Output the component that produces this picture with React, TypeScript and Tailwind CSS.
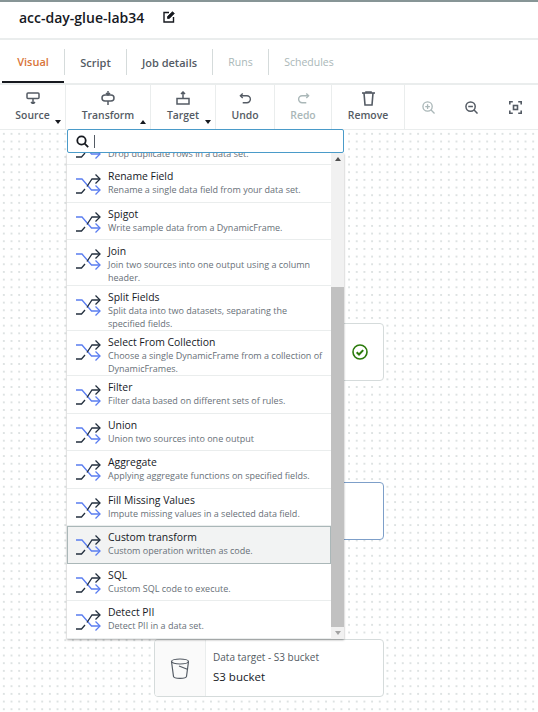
import React from "react";

const Shuffle = () => (
  <svg width="26" height="22" viewBox="0 0 26 22" fill="none" strokeWidth="1.3" className="shrink-0">
    <path d="M1 6h6l9.500 11H25" stroke="#5a7df0" />
    <path d="M20.500 12.500L25 17l-4.500 4.500" stroke="#5a7df0" />
    <path d="M1 20h5.500l3.500-4M12 13.500L17 6h8" stroke="#232f3e" />
    <path d="M20.500 1.500L25 6l-4.500 4.500" stroke="#232f3e" />
  </svg>
);

const rows = [
  { h: "h-[38px]", t: "Rename Field", d: ["Rename a single data field from your data set."] },
  { h: "h-[37px]", t: "Spigot", d: ["Write sample data from a DynamicFrame."] },
  { h: "h-[46px]", t: "Join", d: ["Join two sources into one output using a column", "header."] },
  { h: "h-[45px]", t: "Split Fields", d: ["Split data into two datasets, separating the", "specified fields."] },
  { h: "h-[45px]", t: "Select From Collection", d: ["Choose a single DynamicFrame from a collection of", "DynamicFrames."] },
  { h: "h-[38px]", t: "Filter", d: ["Filter data based on different sets of rules."] },
  { h: "h-[37px]", t: "Union", d: ["Union two sources into one output"] },
  { h: "h-[38px]", t: "Aggregate", d: ["Applying aggregate functions on specified fields."] },
  { h: "h-[37px]", t: "Fill Missing Values", d: ["Impute missing values in a selected data field."] },
  { h: "h-[38px]", t: "Custom transform", d: ["Custom operation written as code."], active: true },
  { h: "h-[37px]", t: "SQL", d: ["Custom SQL code to execute."] },
  { h: "h-[38px]", t: "Detect PII", d: ["Detect PII in a data set."] },
];

const Row = ({ r }: { r: (typeof rows)[number] }) => (
  <div
    className={`${r.h} flex items-start gap-[7px] ${
      r.active ? "bg-[#f2f3f3] border border-[#aab7b8] pl-[7px] pt-[3px]" : "border-b border-[#eaeded] pl-[8px] pt-[4px]"
    }`}
  >
    <div className="pt-[4px]"><Shuffle /></div>
    <div className="min-w-0">
      <div className="text-[10.4px] leading-[14px] text-[#16191f] whitespace-nowrap mb-[1px]">{r.t}</div>
      {r.d.map((l) => (
        <div key={l} className="text-[9px] leading-[12.5px] text-[#687078] whitespace-nowrap">{l}</div>
      ))}
    </div>
  </div>
);

const Tool = ({ w, label, disabled, icon, caret }: { w: string; label: string; disabled?: boolean; icon: React.ReactNode; caret?: "up" | "down" }) => (
  <div className={`${w} relative h-full shrink-0 flex flex-col items-center justify-start pt-[6px] border-r border-[#eaeded]`}>
    <div className="h-[14px] flex items-center justify-center">{icon}</div>
    <div className={`text-[10.4px] leading-[16px] font-semibold mt-[2px] ${disabled ? "text-[#aab7b8]" : "text-[#545b64]"}`}>{label}</div>
    {caret && (
      <span className={`absolute right-[4px] bottom-[5px] w-0 h-0 border-x-[3px] border-x-transparent ${caret === "down" ? "border-t-[4px] border-t-[#16191f]" : "border-b-[4px] border-b-[#16191f]"}`} />
    )}
  </div>
);

const s = { fill: "none", stroke: "#545b64", strokeWidth: 1.5 };

export default function App() {
  return (
    <div className="w-[538px] h-[712px] overflow-hidden bg-white flex flex-col" style={{ fontFamily: '"Open Sans", "Noto Sans", sans-serif' }}>
      <div className="h-[2px] bg-[#879596] shrink-0" />
      <div className="h-[38px] shrink-0 flex items-center pl-[19px] gap-[19px] border-b-2 border-[#eaeded]">
        <span className="text-[14px] font-semibold text-[#16191f] relative -top-[3px]">acc-day-glue-lab34</span>
        <svg width="12" height="12" viewBox="0 0 12 12" fill="none" stroke="#16191f" strokeWidth="1.400" className="relative -top-[3px]">
          <path d="M6 1.500H1v9.500h9.500V6" />
          <path d="M4.500 7.500V5.500L9.500 .7l1.800 1.800-5 5z" fill="#16191f" strokeWidth=".8" />
        </svg>
      </div>
      <div className="h-[45px] shrink-0 flex items-start border-b-2 border-[#eaeded] relative text-[11px] font-semibold">
        <div className="w-[62px] h-[43px] flex items-center justify-center text-[#d9753a] border-b-2 border-[#16191f] ml-[2px] pt-[4px]">Visual</div>
        <div className="w-[62px] flex items-center justify-center text-[#545b64] h-[26px] mt-[9px] pt-[2px] border-l border-[#d5dbdb]">Script</div>
        <div className="w-[86px] flex items-center justify-center text-[#545b64] h-[26px] mt-[9px] pt-[2px] border-l border-[#d5dbdb]">Job details</div>
        <div className="w-[56px] flex items-center justify-center text-[#aab7b8] font-normal text-[10.5px] h-[26px] mt-[9px] pt-[2px] border-l border-[#d5dbdb]">Runs</div>
        <div className="w-[81px] flex items-center justify-center text-[#aab7b8] font-normal text-[10.5px] h-[26px] mt-[9px] pt-[2px] border-l border-[#d5dbdb]">Schedules</div>
      </div>
      <div className="h-[45px] shrink-0 flex items-stretch border-b border-[#eaeded]">
        <Tool w="w-[66px]" label="Source" caret="down" icon={
          <svg width="14" height="12" viewBox="0 0 14 12" {...s}><rect x="1" y="1" width="12" height="5.500" rx="1" /><path d="M7 6.500V12M5 10l2 2 2-2" /></svg>
        } />
        <Tool w="w-[85px]" label="Transform" caret="up" icon={
          <svg width="14" height="14" viewBox="0 0 14 14" {...s}><rect x="1" y="4" width="12" height="6" rx="3" /><path d="M7 0v4M7 10v4M5 2L7 4 9 2" /></svg>
        } />
        <Tool w="w-[65px]" label="Target" caret="down" icon={
          <svg width="14" height="14" viewBox="0 0 14 14" {...s}><rect x="1" y="7.500" width="12" height="5.500" /><path d="M7 7.500V1M5 3L7 1l2 2" /></svg>
        } />
        <Tool w="w-[59px]" label="Undo" icon={
          <svg width="13" height="13" viewBox="0 0 14 14" {...s}><path d="M4 1.500L1.500 4 4 6.500" /><path d="M2 4h6.500a3.700 3.700 0 010 7.500H4" /></svg>
        } />
        <Tool w="w-[57px]" label="Redo" disabled icon={
          <svg width="13" height="13" viewBox="0 0 14 14" {...s} stroke="#aab7b8"><path d="M10 1.500L12.500 4 10 6.500" /><path d="M12 4H5.500a3.700 3.700 0 000 7.500H10" /></svg>
        } />
        <Tool w="w-[73px]" label="Remove" icon={
          <svg width="13" height="15" viewBox="0 0 13 15" fill="none" stroke="#545b64" strokeWidth="1.600"><path d="M0 2h13" /><path d="M2 2l1 12h7l1-12" /><path d="M4 2V1h5v1" /></svg>
        } />
        <div className="flex-1 flex items-center justify-around pl-[2px] pr-[1px]">
          <svg width="13" height="13" viewBox="0 0 14 14" fill="none" stroke="#aab7b8" strokeWidth="1.400"><circle cx="6" cy="6" r="5" /><path d="M9.500 9.500L13.500 13.500M6 3.500v5M3.500 6h5" /></svg>
          <svg width="13" height="13" viewBox="0 0 14 14" fill="none" stroke="#545b64" strokeWidth="1.600"><circle cx="6" cy="6" r="5" /><path d="M9.500 9.500L13.500 13.500M3.500 6h5" /></svg>
          <svg width="13" height="13" viewBox="0 0 13 13" fill="none" stroke="#545b64" strokeWidth="1.600"><path d="M.8 3.500V.8h3M9.200.8h3v2.700M12.200 9.500v2.700h-3M3.800 12.200h-3V9.500" /><rect x="4.500" y="4.500" width="4" height="4" /></svg>
        </div>
      </div>

      <div className="relative flex-1 bg-white bg-[radial-gradient(circle,#d5dbdb_0.6px,transparent_1px)] bg-[size:7.68px_7.68px]">
        <div className="absolute left-[300px] top-[193px] w-[84px] h-[58px] bg-white border border-[#d5dbdb] rounded-[4px] flex items-center pl-[51px]">
          <svg width="16" height="16" viewBox="0 0 16 16" fill="none" stroke="#2b7a0b" strokeWidth="1.600"><circle cx="8" cy="8" r="7" /><path d="M4.700 8.200l2.300 2.300 4.200-4.400" strokeWidth="2" /></svg>
        </div>
        <div className="absolute left-[300px] top-[352px] w-[84px] h-[58px] bg-white border border-[#7d9fc9] rounded-[4px]" />
        <div className="absolute left-[154px] top-[509px] w-[230px] h-[58px] bg-white border border-[#d5dbdb] rounded-[4px] flex overflow-hidden">
          <div className="w-[51px] bg-[#fafafa] border-r border-[#eaeded] flex items-center justify-center">
            <svg width="20" height="21" viewBox="0 0 20 21" fill="none" stroke="#545b64" strokeWidth="1.200"><ellipse cx="10" cy="3.500" rx="8.500" ry="2.500" /><path d="M1.500 3.500l2 15c.2 1 3 1.800 6.500 1.800s6.300-.8 6.500-1.800l2-15" /><path d="M9 8l9 3.500" /></svg>
          </div>
          <div className="pl-[7px] pt-[10px]">
            <div className="text-[10px] leading-[15px] text-[#545b64]">Data target - S3 bucket</div>
            <div className="text-[11.5px] leading-[18px] text-[#16191f] mt-[3px]">S3 bucket</div>
          </div>
        </div>

        <div className="absolute left-[67px] -top-px w-[277px]">
          <div className="relative z-10 h-[24px] bg-white border border-[#4a9bc9] rounded-[2px] flex items-center pl-[8px] gap-[5px]">
            <svg width="13" height="13" viewBox="0 0 13 13" fill="none" stroke="#16191f" strokeWidth="1.800"><circle cx="5.500" cy="5.500" r="4.200" /><path d="M8.700 8.700l3.500 3.500" /></svg>
            <span className="w-px h-[13px] bg-[#545b64]" />
          </div>
          <div className="h-[486px] bg-white flex shadow-[0_1px_2px_rgba(0,0,0,0.35)] overflow-hidden">
            <div className="w-[264px] shrink-0">
              <div className="h-[12px] border-b border-[#eaeded] relative overflow-hidden">
                <div className="absolute -top-[5px] left-[41px] text-[9px] leading-[12.5px] text-[#687078] whitespace-nowrap">Drop duplicate rows in a data set.</div>
                <div className="absolute -top-[16px] left-[8px]"><Shuffle /></div>
              </div>
              {rows.map((r) => (
                <Row key={r.t} r={r} />
              ))}
            </div>
            <div className="flex-1 bg-[#f1f1f1] flex flex-col items-center">
              <div className="h-[12px] w-full flex items-center justify-center shrink-0">
                <span className="w-0 h-0 border-x-[3.5px] border-x-transparent border-b-[4px] border-b-[#505050]" />
              </div>
              <div className="h-[122px] shrink-0" />
              <div className="flex-1 w-full bg-[#c1c1c1]" />
              <div className="h-[12px] w-full flex items-center justify-center shrink-0">
                <span className="w-0 h-0 border-x-[3.5px] border-x-transparent border-t-[4px] border-t-[#a3a3a3]" />
              </div>
            </div>
          </div>
        </div>
      </div>
    </div>
  );
}
